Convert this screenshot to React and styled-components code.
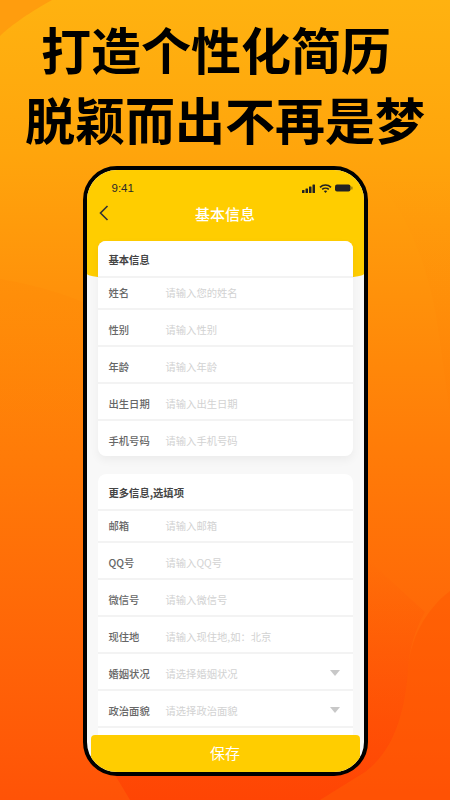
import React from 'react'
import styled, { createGlobalStyle } from 'styled-components'

const GlobalStyle = createGlobalStyle`
	html, body {
		margin: 0;
		padding: 0;
	}
	body {
		font-family: "Liberation Sans", "Noto Sans CJK SC", sans-serif;
	}
`

const Page = styled.div`
	position: relative;
	width: 450px;
	height: 800px;
	overflow: hidden;
	background: linear-gradient(180deg, #ffb210 0%, #ffa50c 19%, #ff7d08 55%, #ff5307 100%);
`
const Backdrop = styled.svg`
	position: absolute;
	top: 0;
	left: 0;
`
const Content = styled.div`
	position: relative;
	display: flex;
	flex-direction: column;
	align-items: center;
	padding-top: 13px;
`
const Headline = styled.h1`
	margin: 0 0 0 ${(props) => props.shift}px;
	font-family: "Noto Sans CJK SC", sans-serif;
	font-size: 50px;
	line-height: 70px;
	font-weight: 600;
	color: #000;
	white-space: nowrap;
`
const Phone = styled.div`
	box-sizing: border-box;
	position: relative;
	width: 285px;
	height: 610px;
	margin-top: 13px;
	border: 4px solid #000;
	border-radius: 34px;
	background: #f8f8f8;
	overflow: hidden;
`
const Header = styled.div`
	height: 112px;
	background: #ffcd00;
	border-radius: 0 0 50% 50% / 0 0 8px 8px;
`
const StatusBar = styled.div`
	display: flex;
	justify-content: space-between;
	align-items: center;
	padding: 10px 11px 0 25px;
	height: 16px;
`
const Time = styled.span`
	font-size: 11.5px;
	color: #2a2a2a;
`
const StatusIcons = styled.div`
	display: flex;
	align-items: center;
	gap: 3px;
`
const NavBar = styled.div`
	position: relative;
	display: flex;
	justify-content: center;
	align-items: center;
	margin-top: 3px;
	height: 28px;
`
const BackIcon = styled.svg`
	position: absolute;
	left: 12px;
	top: 6px;
`
const Title = styled.span`
	font-family: "Noto Sans CJK SC", sans-serif;
	font-size: 15px;
	font-weight: 500;
	color: #fff;
`
const Body = styled.div`
	margin-top: -41px;
	padding: 0 11px;
	display: flex;
	flex-direction: column;
	gap: 18px;
`
const Card = styled.div`
	border-radius: 8px;
	background: #f3f3f3;
	overflow: hidden;
	box-shadow: ${(props) => (props.flat ? 'none' : '0 4px 10px rgba(0, 0, 0, 0.05)')};
	display: flex;
	flex-direction: column;
	gap: 2px;
`
const CardTitle = styled.div`
	box-sizing: border-box;
	height: 35px;
	padding: 1px 0 0 11px;
	background: #fff;
	display: flex;
	align-items: center;
	font-family: "Noto Sans CJK SC", sans-serif;
	font-size: 10.3px;
	font-weight: 700;
	color: #444;
`
const Row = styled.div`
	box-sizing: border-box;
	height: ${(props) => (props.first ? 30 : 35)}px;
	padding: ${(props) => (props.first ? '0 13px 2px 11px' : '3px 13px 0 11px')};
	background: #fff;
	display: flex;
	align-items: center;
	font-family: "Noto Sans CJK SC", sans-serif;
	font-size: 10.3px;
`
const Label = styled.span`
	width: 57px;
	font-weight: 500;
	color: #666;
`
const Placeholder = styled.span`
	flex: 1;
	color: #d2d2d2;
`
const Caret = styled.div`
	width: 0;
	height: 0;
	border-left: 5px solid transparent;
	border-right: 5px solid transparent;
	border-top: 6px solid #c8c8c8;
`
const SaveButton = styled.div`
	position: absolute;
	left: 4px;
	right: 4px;
	bottom: 0;
	height: 37px;
	padding-bottom: 2px;
	box-sizing: border-box;
	border-radius: 4px 4px 0 0;
	background: #ffcd00;
	display: flex;
	justify-content: center;
	align-items: center;
	font-family: "Noto Sans CJK SC", sans-serif;
	font-size: 15px;
	color: #fff;
`

const basicRows = [
	['姓名', '请输入您的姓名'],
	['性别', '请输入性别'],
	['年龄', '请输入年龄'],
	['出生日期', '请输入出生日期'],
	['手机号码', '请输入手机号码'],
]
const moreRows = [
	['邮箱', '请输入邮箱'],
	['QQ号', '请输入QQ号'],
	['微信号', '请输入微信号'],
	['现住地', '请输入现住地,如：北京'],
	['婚姻状况', '请选择婚姻状况', true],
	['政治面貌', '请选择政治面貌', true],
	['', ''],
]

function FormRows({ rows }) {
	return rows.map(([label, hint, select], i) => (
		<Row key={i} first={i === 0}>
			<Label>{label}</Label>
			<Placeholder>{hint}</Placeholder>
			{select && <Caret />}
		</Row>
	))
}

export default function App() {
	return (
		<Page>
			<GlobalStyle />
			<Backdrop width="450" height="800" viewBox="0 0 450 800">
				<defs>
					<linearGradient id="fadeUpper" x1="0" y1="0" x2="0" y2="1">
						<stop offset="0" stopColor="#ff7a00" stopOpacity="0.14" />
						<stop offset="1" stopColor="#ff7a00" stopOpacity="0" />
					</linearGradient>
					<linearGradient id="fadeRight" x1="0" y1="0" x2="0" y2="1">
						<stop offset="0" stopColor="#ff7a00" stopOpacity="0" />
						<stop offset="1" stopColor="#ff7a00" stopOpacity="0.16" />
					</linearGradient>
					<linearGradient id="fadeLower" x1="0" y1="0" x2="0" y2="1">
						<stop offset="0" stopColor="#ff3000" stopOpacity="0" />
						<stop offset="1" stopColor="#ff3000" stopOpacity="0.4" />
					</linearGradient>
				</defs>
				<path d="M0 0H52C25 15 8 28 0 36Z" fill="#ff9d0e" />
				<path d="M0 279C30 284 60 292 85 303V520H0Z" fill="url(#fadeUpper)" />
				<path d="M370 176C405 205 425 260 435 310C440 340 445 380 450 412V176Z" fill="url(#fadeRight)" />
				<path d="M450 591C425 610 410 640 408 670C405 710 395 750 365 772L320 800H450Z" fill="#ff5000" opacity="0.35" />
				<path d="M112 770L130 800H320L365 772C395 750 405 710 408 670C409 650 415 630 425 612L368 560H112Z" fill="url(#fadeLower)" />
			</Backdrop>
			<Content>
				<Headline shift={-18}>打造个性化简历</Headline>
				<Headline shift={0}>脱颖而出不再是梦</Headline>
				<Phone>
					<Header>
						<StatusBar>
							<Time>9:41</Time>
							<StatusIcons>
								<svg width="14" height="9" viewBox="0 0 14 9" fill="#222">
									<rect x="0" y="6" width="2.500" height="3" rx="0.500" />
									<rect x="3.500" y="4.500" width="2.500" height="4.500" rx="0.500" />
									<rect x="7" y="2.500" width="2.500" height="6.500" rx="0.500" />
									<rect x="10.500" y="0.500" width="2.500" height="8.500" rx="0.500" />
								</svg>
								<svg width="13" height="9" viewBox="0 0 13 9" fill="none" stroke="#222" strokeWidth="1.600">
									<path d="M1 3.300C4.200 0.300 8.800 0.300 12 3.300" />
									<path d="M3.200 5.400C5 3.800 8 3.800 9.800 5.400" />
									<path d="M6.500 9L4.800 7C5.800 6.200 7.200 6.200 8.200 7Z" fill="#222" stroke="none" />
								</svg>
								<svg width="18" height="8" viewBox="0 0 18 8" fill="#222">
									<rect x="0" y="0.500" width="15.500" height="7" rx="2" />
									<rect x="16.200" y="2.500" width="1.300" height="3" rx="0.500" opacity="0.5" />
								</svg>
							</StatusIcons>
						</StatusBar>
						<NavBar>
							<BackIcon width="10" height="16" viewBox="0 0 10 16" fill="none" stroke="#333" strokeWidth="1.600">
								<path d="M8.500 1L1.500 8L8.500 15" />
							</BackIcon>
							<Title>基本信息</Title>
						</NavBar>
					</Header>
					<Body>
						<Card>
							<CardTitle>基本信息</CardTitle>
							<FormRows rows={basicRows} />
						</Card>
						<Card flat>
							<CardTitle>更多信息,选填项</CardTitle>
							<FormRows rows={moreRows} />
						</Card>
					</Body>
					<SaveButton>保存</SaveButton>
				</Phone>
			</Content>
		</Page>
	)
}
